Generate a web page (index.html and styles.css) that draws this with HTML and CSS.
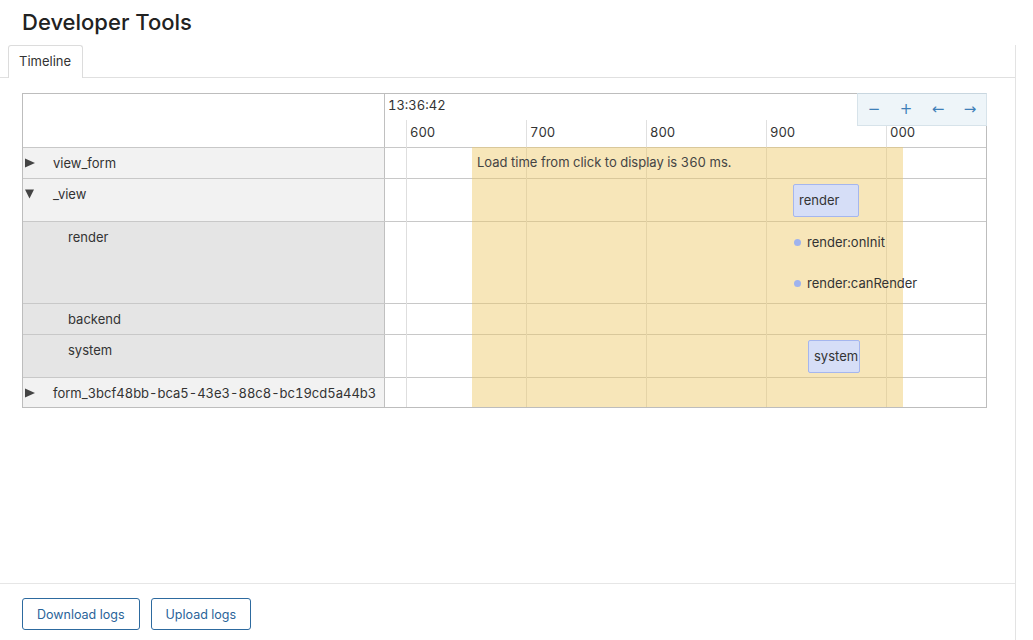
FILE: index.html
```html
<!DOCTYPE html>
<html lang="en">
<head>
<meta charset="utf-8">
<title>Developer Tools</title>
<link rel="stylesheet" href="styles.css">
</head>
<body>
<header class="title-bar"><h1 class="title">Developer Tools</h1></header>
<div class="panel">
  <div class="tabs"><div class="tab">Timeline</div></div>
  <main class="content">
    <div class="tl">
      <div class="tl-head">
        <div class="lcell head-l"></div>
        <div class="axis">
          <div class="axis-time">13:36:42</div>
          <div class="tick" style="left:21px"><span>600</span></div>
          <div class="tick" style="left:141px"><span>700</span></div>
          <div class="tick" style="left:261px"><span>800</span></div>
          <div class="tick" style="left:381px"><span>900</span></div>
          <div class="tick" style="left:501px"><span>000</span></div>
          <div class="controls">
            <button class="ctrl" type="button">&minus;</button>
            <button class="ctrl" type="button">+</button>
            <button class="ctrl" type="button">&larr;</button>
            <button class="ctrl" type="button">&rarr;</button>
          </div>
        </div>
      </div>
      <div class="tl-body">
        <div class="overlay">
          <div class="vline" style="left:21px"></div>
          <div class="vline" style="left:141px"></div>
          <div class="vline" style="left:261px"></div>
          <div class="vline" style="left:381px"></div>
          <div class="vline" style="left:501px"></div>
          <div class="band" style="left:87px;width:431px">Load time from click to display is 360 ms.</div>
        </div>

        <div class="row h30">
          <div class="lcell top"><svg class="tri" viewBox="0 0 10 10"><polygon points="0,0.5 10,5 0,9.5"/></svg><span>view_form</span></div>
          <div class="rcell"></div>
        </div>
        <div class="row h42">
          <div class="lcell top"><svg class="tri" viewBox="0 0 10 10"><polygon points="0,0.5 9,0.5 4.5,9.5"/></svg><span>_view</span></div>
          <div class="rcell">
            <div class="ev-box ev-render" style="left:408px">render</div>
          </div>
        </div>
        <div class="row h81">
          <div class="lcell child">render</div>
          <div class="rcell">
            <div class="ev-dot" style="left:408px;top:12px"><i class="dot"></i>render:onInit</div>
            <div class="ev-dot" style="left:408px;top:53px"><i class="dot"></i>render:canRender</div>
          </div>
        </div>
        <div class="row h30">
          <div class="lcell child">backend</div>
          <div class="rcell"></div>
        </div>
        <div class="row h42">
          <div class="lcell child">system</div>
          <div class="rcell">
            <div class="ev-box ev-system" style="left:423px">system</div>
          </div>
        </div>
        <div class="row h29">
          <div class="lcell top"><svg class="tri" viewBox="0 0 10 10"><polygon points="0,0.5 10,5 0,9.5"/></svg><span>form_3bcf48bb-bca5-43e3-88c8-bc19cd5a44b3</span></div>
          <div class="rcell"></div>
        </div>
      </div>
    </div>
  </main>
  <footer class="footer">
    <button class="btn" type="button">Download logs</button>
    <button class="btn" type="button">Upload logs</button>
  </footer>
</div>
</body>
</html>
```
FILE: styles.css
```css
* { box-sizing: border-box; }
html, body { margin: 0; padding: 0; background: #fff; }
body {
  font-family: Inter, "Noto Sans", "Liberation Sans", sans-serif;
  font-size: 13px;
  font-variant-numeric: tabular-nums;
  color: #333;
  width: 1033px;
  height: 640px;
  overflow: hidden;
}
.title-bar {
  height: 45px;
  display: flex;
  align-items: center;
  padding: 0 22px;
}
.title {
  margin: 0;
  font-size: 22px;
  font-weight: 500;
  color: #222;
  line-height: 28px;
  padding-bottom: 1px;
}
.panel {
  width: 1016px;
  height: 595px;
  border-right: 1px solid #e3e3e3;
  display: flex;
  flex-direction: column;
}
.tabs {
  height: 33px;
  border-bottom: 1px solid #e0e0e0;
  display: flex;
  align-items: flex-end;
  padding-left: 8px;
}
.tab {
  width: 75px;
  height: 33px;
  margin-bottom: -1px;
  border: 1px solid #dcdcdc;
  border-bottom: none;
  border-radius: 3px 3px 0 0;
  background: #fff;
  padding: 7px 0 0 10px;
  line-height: 16px;
  color: #333;
}
.content {
  flex: 1;
  padding: 15px 22px 0;
}
.tl {
  width: 965px;
  border: 1px solid #bdbdbd;
}
.tl-head {
  display: flex;
  height: 53px;
}
.lcell {
  width: 362px;
  flex: none;
  border-right: 1px solid #c0c0c0;
  line-height: 16px;
  padding-top: 7px;
  color: #333;
}
.head-l { background: #fff; }
.axis {
  position: relative;
  flex: 1;
}
.axis-time {
  position: absolute;
  left: 3px;
  top: 3px;
  line-height: 16px;
  color: #333;
}
.tick {
  position: absolute;
  top: 26px;
  bottom: 0;
  width: 1px;
  background: #e0e0e0;
}
.tick span {
  position: absolute;
  left: 4px;
  top: 4px;
  line-height: 16px;
  color: #333;
}
.controls {
  position: absolute;
  top: -1px;
  right: -1px;
  width: 130px;
  height: 33px;
  display: flex;
  background: #eef5f9;
  border: 1px solid #d7e3ea;
  border-top-color: #c8d6df;
  z-index: 3;
}
.ctrl {
  width: 32px;
  height: 31px;
  border: none;
  background: transparent;
  padding: 0;
  font-family: "DejaVu Sans", sans-serif;
  font-size: 15px;
  color: #3e7fb8;
  line-height: 31px;
}
.tl-body { position: relative; }
.overlay {
  position: absolute;
  left: 362px;
  top: 0;
  right: 0;
  bottom: 0;
  z-index: 1;
  pointer-events: none;
}
.vline {
  position: absolute;
  top: 0;
  bottom: 0;
  width: 1px;
  background: #dedede;
}
.band {
  position: absolute;
  top: 0;
  bottom: 0;
  background: rgba(237, 199, 99, 0.45);
  padding: 7px 5px 0;
  line-height: 16px;
  color: #444;
  white-space: nowrap;
}
.row {
  display: flex;
  border-top: 1px solid #c8c8c8;
}
.h29 { height: 30px; }
.h30 { height: 31px; }
.h42 { height: 43px; }
.h81 { height: 82px; }
.lcell.top {
  background: #f2f2f2;
  padding-left: 2px;
  display: flex;
  align-items: flex-start;
}
.lcell.child {
  background: #e5e5e5;
  padding-left: 45px;
}
.tri {
  width: 10px;
  height: 10px;
  margin: 3px 18px 0 0;
  fill: #444;
  flex: none;
}
.rcell {
  flex: 1;
  position: relative;
}
.ev-box {
  position: absolute;
  top: 5px;
  height: 33px;
  background: #d6def7;
  border: 1px solid #a5b6ee;
  border-radius: 2px;
  padding: 7px 0 0 5px;
  line-height: 16px;
  color: #333;
  z-index: 2;
}
.ev-render { width: 66px; }
.ev-system { width: 52px; }
.ev-dot {
  position: absolute;
  display: flex;
  align-items: center;
  line-height: 16px;
  color: #333;
  white-space: nowrap;
  z-index: 2;
}
.dot {
  width: 7px;
  height: 7px;
  border-radius: 50%;
  background: #9fb3ee;
  margin: 0 6px 0 1px;
}
.footer {
  height: 57px;
  border-top: 1px solid #e6e6e6;
  padding: 14px 22px 0;
  display: flex;
  gap: 11px;
  align-items: flex-start;
}
.btn {
  height: 32px;
  padding: 0 14px;
  border: 1px solid #2d6a9f;
  border-radius: 3px;
  background: #fff;
  color: #2a6399;
  font-family: Inter, "Noto Sans", "Liberation Sans", sans-serif;
  font-size: 12.5px;
}
```
